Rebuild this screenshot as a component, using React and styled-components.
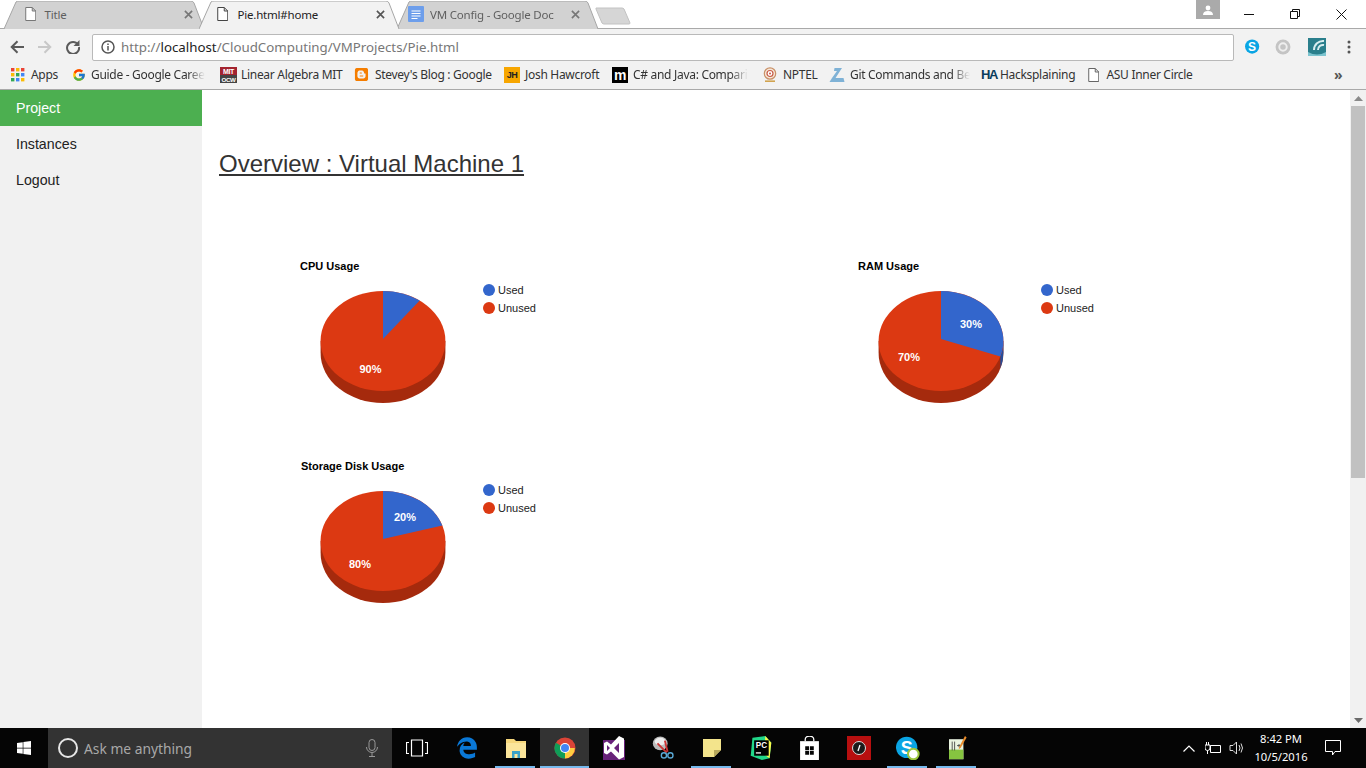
import React from "react";
import styled, { createGlobalStyle } from "styled-components";
import { FcGoogle } from "react-icons/fc";
import { FaBlogger, FaWindows, FaEdgeLegacy } from "react-icons/fa6";

const Global = createGlobalStyle`
  html, body { margin: 0; padding: 0; width: 1366px; height: 768px; overflow: hidden; background: #fff; }
  * { box-sizing: border-box; }
`;
const UI = `"Noto Sans", "Open Sans", sans-serif`;
const WEB = `"Liberation Sans", Arial, sans-serif`;

const Shell = styled.div`width:1366px;height:768px;display:flex;flex-direction:column;overflow:hidden;font-family:${WEB};`;

/* ---------- tab strip ---------- */
const TabStrip = styled.div`height:29px;display:flex;align-items:stretch;padding:1px 0 0 4px;background:#fff;border-bottom:1px solid #a9a9a9;flex:none;`;
const Tab = styled.div`
  position:relative;height:28px;width:${p=>p.$w}px;margin-left:${p=>p.$ml}px;padding:0 ${p=>p.$pr}px 2px ${p=>p.$pl}px;
  display:flex;align-items:center;z-index:${p=>p.$active?2:1};font-family:${UI};font-size:11.5px;letter-spacing:-.2px;
  color:${p=>p.$active?"#222":"#5f5f5f"};
`;
const TabShape = styled.svg`position:absolute;left:0;top:0;width:100%;height:100%;z-index:-1;`;
const TabTitle = styled.span`flex:1;margin-left:${p=>p.$gap}px;white-space:nowrap;overflow:hidden;
  ${p=>p.$fade?"-webkit-mask-image:linear-gradient(90deg,#000 88%,transparent);mask-image:linear-gradient(90deg,#000 88%,transparent);":""}`;
const NewTab = styled.svg`width:36px;height:18px;margin:6px 0 0 -9px;flex:none;`;
const Spacer = styled.div`flex:1;`;
const Avatar = styled.div`width:24px;height:19px;margin-top:-1px;background:#aaa;display:flex;align-items:center;justify-content:center;flex:none;`;
const WinButtons = styled.div`display:flex;margin:0 2px 0 6px;margin-top:-1px;flex:none;`;
const WinButton = styled.div`width:46px;height:28px;display:flex;align-items:center;justify-content:center;`;

const TabShapeFor = ({active,w}) => (
  <TabShape viewBox={`0 0 ${w} 28`} preserveAspectRatio="none">
    <path d={`M0 28 L12 1 Q13 0 15 0 L${w-19} 0 Q${w-17} 0 ${w-16} 2 L${w-6} 28`} fill={active?"#f2f2f2":"#d2d2d2"} stroke="#a6a6a6" strokeWidth="1"/>
  </TabShape>
);
const FileIcon = ({color="#666",size=14}) => (
  <svg width={size*0.82} height={size} viewBox="0 0 11 14" style={{flex:"none"}}>
    <path d="M.5.5h6.5l3.5 3.500v9.500h-10z M7 .5v3.500h3.500" fill="#fff" stroke={color} strokeWidth="1"/>
  </svg>
);
const DocIcon = () => (
  <svg width="16" height="16" viewBox="0 0 16 16" style={{flex:"none"}}>
    <rect width="16" height="16" rx="1" fill="#6d9eeb"/>
    <path d="M3.500 5h9M3.500 7.500h9M3.500 10h9M3.500 12.500h6" stroke="#fff" strokeWidth="1.100"/>
  </svg>
);
const X = ({color="#777"}) => (
  <svg width="9" height="9" viewBox="0 0 10 10" style={{flex:"none"}}>
    <path d="M1 1l8 8M9 1l-8 8" stroke={color} strokeWidth="1.800"/>
  </svg>
);

/* ---------- toolbar ---------- */
const Toolbar = styled.div`height:34px;background:#f2f2f2;display:flex;align-items:center;padding:2px 8px 0 0;flex:none;`;
const NavIcon = styled.div`width:28px;height:28px;display:flex;align-items:center;justify-content:center;flex:none;`;
const NavGroup = styled.div`display:flex;padding-left:3px;margin-right:5px;`;
const Omnibox = styled.div`width:1142px;height:27px;background:#fff;border:1px solid #b9b9b9;border-radius:2px;display:flex;align-items:center;padding-left:8px;gap:6px;font-family:${UI};font-size:13.3px;color:#777;white-space:nowrap;flex:none;`;
const Host = styled.span`color:#222;`;
const Ext = styled.div`display:flex;align-items:center;margin-left:9px;`;
const ExtCell = styled.div`width:${p=>p.$w}px;display:flex;justify-content:center;align-items:center;`;

/* ---------- bookmarks ---------- */
const Bookmarks = styled.div`height:27px;background:#f2f2f2;border-bottom:1px solid #a9a9a9;display:flex;align-items:center;padding:0 0 3px 11px;font-family:${UI};font-size:12px;letter-spacing:-.3px;color:#333;flex:none;`;
const Bookmark = styled.div`width:${p=>p.$w}px;display:flex;align-items:center;gap:${p=>p.$gap ?? 6}px;flex:none;white-space:nowrap;`;
const BookmarkText = styled.span`display:block;
  ${p=>p.$fade?"-webkit-mask-image:linear-gradient(90deg,#000 85%,transparent);mask-image:linear-gradient(90deg,#000 85%,transparent);":""}`;
const Square = styled.div`width:16px;height:16px;flex:none;background:${p=>p.$bg};color:${p=>p.$fg};font:bold ${p=>p.$fs}px ${WEB};display:flex;align-items:center;justify-content:center;letter-spacing:${p=>p.$ls ?? -.5}px;`;
const More = styled.span`margin-left:133px;color:#555;font-size:14px;font-weight:700;`;

/* ---------- page ---------- */
const Page = styled.div`flex:1;min-height:0;display:flex;background:#fff;`;
const Sidebar = styled.nav`width:202px;background:#f1f1f1;flex:none;`;
const NavItem = styled.div`height:36px;padding:0 16px;display:flex;align-items:center;font-size:14.2px;color:${p=>p.$active?"#fff":"#222"};background:${p=>p.$active?"#4caf50":"transparent"};`;
const Main = styled.main`flex:1;padding:58px 0 0 17px;min-width:0;`;
const Heading = styled.h2`margin:0;font-size:24px;line-height:32px;font-weight:400;color:#333;text-decoration:underline;`;
const Charts = styled.div`display:grid;grid-template-columns:558px 558px;grid-auto-rows:200px;margin:78px 0 0 81px;`;
const Chart = styled.section`display:flex;flex-direction:column;`;
const ChartTitle = styled.div`height:23px;line-height:16px;padding-left:${p=>p.$indent||0}px;font-size:11px;font-weight:700;color:#000;`;
const ChartBody = styled.div`display:flex;align-items:flex-start;padding-left:20px;`;
const PieSvg = styled.svg`width:126px;height:114px;margin-top:9px;flex:none;`;
const PieLabel = styled.text`font-family:${WEB};font-size:11px;font-weight:700;fill:#fff;text-anchor:middle;dominant-baseline:central;`;
const Legend = styled.div`margin-left:37px;display:flex;flex-direction:column;`;
const LegendRow = styled.div`height:18px;display:flex;align-items:center;gap:3px;font-size:11px;color:#222;`;
const Dot = styled.span`width:12px;height:12px;border-radius:50%;background:${p=>p.$c};flex:none;`;

const Scrollbar = styled.div`width:16px;background:#f1f1f1;display:flex;flex-direction:column;align-items:center;flex:none;`;
const ScrollArrow = styled.div`width:16px;height:16px;flex:none;display:flex;align-items:center;justify-content:center;`;
const Thumb = styled.div`width:14px;height:372px;background:#c1c1c1;flex:none;`;

/* ---------- taskbar ---------- */
const Taskbar = styled.div`height:40px;background:#050505;display:flex;align-items:stretch;flex:none;color:#fff;font-family:${UI};`;
const Start = styled.div`width:48px;display:flex;align-items:center;justify-content:center;flex:none;`;
const Search = styled.div`width:344px;background:#333;display:flex;align-items:center;padding-left:10px;flex:none;color:#a8a8a8;font-size:13.8px;`;
const Cortana = styled.span`width:20px;height:20px;border:2.5px solid #e6e6e6;border-radius:50%;margin-right:6px;flex:none;`;
const Mic = styled.span`margin-left:auto;margin-right:14px;display:flex;`;
const TaskView = styled.div`width:50px;display:flex;align-items:center;justify-content:center;flex:none;`;
const TaskIcon = styled.div`
  width:49px;flex:none;display:flex;align-items:center;justify-content:center;position:relative;
  background:${p=>p.$on?"#333":"transparent"};
  ${p=>p.$run?`&:after{content:"";position:absolute;bottom:0;left:${p.$on?0:4}px;right:${p.$on?0:5}px;height:2px;background:#76b9ed;}`:""}
`;
const Tray = styled.div`margin-left:auto;display:flex;align-items:center;flex:none;`;
const TrayIcon = styled.div`width:${p=>p.$w||24}px;display:flex;align-items:center;justify-content:center;`;
const Clock = styled.div`width:62px;text-align:center;font-size:11.2px;line-height:18px;margin-left:1px;`;
const Notify = styled.div`width:42px;margin-right:12px;display:flex;justify-content:center;align-items:center;`;

/* ---------- data ---------- */
const BLUE="#3366cc", RED="#dc3912", DARKRED="#a52a0d", DARKBLUE="#264d99";
const CX=63, CY=51, RX=62.4, RY=50, D=12;
const pt=(deg,dy=0)=>{const r=deg*Math.PI/180;return [CX+RX*Math.sin(r),CY-RY*Math.cos(r)+dy];};
const Pie=({used,labels})=>{
  const a=used*3.6;
  const [x,y]=pt(a);
  const large=a>180?1:0;
  const [sx,sy]=pt(90);
  const [bx,by]=pt(a,D);
  return (
    <PieSvg viewBox="0 0 126 114">
      <path d={`M${CX-RX} ${CY} v${D} A${RX} ${RY} 0 0 0 ${CX+RX} ${CY+D} v${-D} z`} fill={DARKRED}/>
      {a>90 && <path d={`M${sx} ${sy} v${D} A${RX} ${RY} 0 0 1 ${bx} ${by} L${x} ${y} A${RX} ${RY} 0 0 0 ${sx} ${sy} z`} fill={DARKBLUE}/>}
      <ellipse cx={CX} cy={CY} rx={RX} ry={RY} fill={RED}/>
      <path d={`M${CX} ${CY-2} L${CX} ${CY-RY} A${RX} ${RY} 0 ${large} 1 ${x} ${y} z`} fill={BLUE}/>
      {labels.map(l=><PieLabel key={l.t} x={l.x} y={l.y}>{l.t}</PieLabel>)}
    </PieSvg>
  );
};
const charts=[
  {title:"CPU Usage",used:10,labels:[{t:"90%",x:50.5,y:79}]},
  {title:"RAM Usage",used:30,labels:[{t:"30%",x:93,y:34},{t:"70%",x:31,y:67}]},
  {title:"Storage Disk Usage",used:20,indent:1,labels:[{t:"20%",x:85,y:27},{t:"80%",x:40,y:74}]},
];

const AppsIcon=()=>{
  const c=["#ea4335","#fbbc05","#ea4335","#fbbc05","#34a853","#4285f4","#34a853","#4285f4","#fbbc05"];
  return <svg width="14" height="14" viewBox="0 0 14 14" style={{flex:"none"}}>{c.map((f,i)=><rect key={i} x={(i%3)*5} y={Math.floor(i/3)*5} width="3.4" height="3.4" fill={f}/>)}</svg>;
};
const MitIcon=()=>(
  <svg width="17" height="16" viewBox="0 0 17 16" style={{flex:"none"}}>
    <rect width="17" height="8" fill="#a3232f"/><rect y="8" width="17" height="8" fill="#444"/>
    <text x="8.5" y="6.8" fontFamily={WEB} fontSize="7" fontWeight="700" fill="#fff" textAnchor="middle">MIT</text>
    <text x="8.5" y="14.5" fontFamily={WEB} fontSize="6.2" fontWeight="700" fill="#fff" textAnchor="middle">OCW</text>
  </svg>
);
const NptelIcon=()=>(
  <svg width="16" height="16" viewBox="0 0 16 16" style={{flex:"none"}}>
    <circle cx="8" cy="6.5" r="5.7" fill="#f6e7d8" stroke="#c99067" strokeWidth="1.2"/>
    <circle cx="8" cy="6.5" r="3" fill="#fff" stroke="#c75b46" strokeWidth="1.2"/>
    <circle cx="8" cy="6.5" r="1" fill="#c75b46"/>
    <rect x="3" y="13.4" width="10" height="1.6" fill="#d1a34f"/>
  </svg>
);
const GitLogo=()=>(
  <svg width="16" height="16" viewBox="0 0 16 16" style={{flex:"none"}}>
    <path d="M5.5 1H13L6.5 11H14.5L15.5 15H.5L3 11 8 4H5z" fill="#7fb2d6"/>
  </svg>
);

const Skype=({size=15,dot})=>(
  <svg width={size+ (dot?3:0)} height={size+(dot?3:0)} viewBox="0 0 18 18" style={{flex:"none"}}>
    <circle cx="8" cy="8.5" r="8" fill="#0aa5e4"/>
    <text x="8" y="13.4" fontFamily={WEB} fontSize="13.5" fontWeight="700" fill="#fff" textAnchor="middle">S</text>
    {dot && <circle cx="13" cy="13.5" r="4" fill="#fff" stroke="#9bc53d" strokeWidth="1.5"/>}
  </svg>
);
const ChromeIcon=()=>(
  <svg width="22" height="22" viewBox="0 0 22 22">
    <circle cx="11" cy="11" r="10.5" fill="#db4437"/>
    <path d="M11 11L1.9 5.7A10.5 10.5 0 0 0 11 21.5L16 11z" fill="#0f9d58"/>
    <path d="M11 11h9.9A10.5 10.5 0 0 1 11 21.5z" fill="#ffcd40"/>
    <circle cx="11" cy="11" r="5" fill="#fff"/><circle cx="11" cy="11" r="4" fill="#4285f4"/>
  </svg>
);
const FolderIcon=()=>(
  <svg width="22" height="19" viewBox="0 0 22 19">
    <path d="M1 0h8l2 2h10v17H1z" fill="#f6d77c"/><path d="M1 4h20v15H1z" fill="#fbe59b"/>
    <path d="M7 19v-7h8v7h-2.500v-4h-3v4z" fill="#3aa2c9"/>
  </svg>
);
const VsIcon=()=>(
  <svg width="22" height="24" viewBox="0 0 22 24">
    <path d="M0 4h22v20H0z" fill="#68217a"/>
    <path d="M16 0l5 2.500V21l-5 2.500-8-8-4 3-3-1.500V7l3-1.500 4 3zM4 9v6l3-3zM16 7l-5 5 5 5z" fill="#fff"/>
  </svg>
);
const SnipIcon=()=>(
  <svg width="24" height="24" viewBox="0 0 24 26">
    <ellipse cx="9" cy="8" rx="8" ry="7.500" fill="#bbb"/><ellipse cx="9" cy="6" rx="6" ry="4" fill="#eee"/>
    <path d="M6 8l10 10M14 5l3 12" stroke="#c33" strokeWidth="2"/>
    <circle cx="13" cy="21" r="2.800" fill="none" stroke="#5aa9d6" strokeWidth="1.500"/>
    <circle cx="20" cy="21" r="2.800" fill="none" stroke="#5aa9d6" strokeWidth="1.500"/>
  </svg>
);
const Sticky=()=>(
  <svg width="18" height="18" viewBox="0 0 18 18"><path d="M0 0h18v11l-7 7H0z" fill="#f3e48c"/><path d="M18 11l-7 7v-7z" fill="#b8a95c"/></svg>
);
const PcIcon=()=>(
  <svg width="24" height="24" viewBox="0 0 24 28">
    <path d="M2 2L17 0l7 8-2 18-9 2L0 23z" fill="#21d789"/><path d="M17 0l7 8-2 18-6-4z" fill="#fcf84a"/>
    <rect x="4" y="5" width="17" height="18" fill="#000"/>
    <text x="12.500" y="14" fontFamily={WEB} fontSize="9.500" fontWeight="700" fill="#fff" textAnchor="middle">PC</text>
    <rect x="6" y="19" width="6" height="1.500" fill="#fff"/>
  </svg>
);
const StoreIcon=()=>(
  <svg width="21" height="24" viewBox="0 0 22 28">
    <path d="M6 6V4a5 4 0 0 1 10 0v2" fill="none" stroke="#fff" strokeWidth="1.500"/>
    <path d="M0 6h22v22H0z" fill="#fff"/>
    <path d="M6 12h4.500v4.500H6zM11.500 12H16v4.500h-4.500zM6 17.500h4.500V22H6zM11.500 17.500H16V22h-4.500z" fill="#050505"/>
  </svg>
);
const RedIcon=()=>(
  <svg width="24" height="24" viewBox="0 0 24 24">
    <rect width="24" height="24" fill="#b70f0f"/><circle cx="12" cy="12" r="6.500" fill="#1a1a1a" stroke="#ddd" strokeWidth="1"/>
    <path d="M11 15l2-6" stroke="#fff" strokeWidth="1.300"/>
  </svg>
);
const NotepadIcon=()=>(
  <svg width="22" height="24" viewBox="0 0 22 30">
    <path d="M1 4h18v25H1z" fill="#e9f3e0"/><path d="M1 17h18v12H1z" fill="#86c440"/>
    <path d="M5 7v11M8 7v11M11 12h5M13.500 10v4" stroke="#333" strokeWidth="1"/>
    <path d="M21 0l-7 13-1 4 3-3 7-12z" fill="#e98b2a"/>
  </svg>
);

export default function App(){
  return (
    <Shell>
      <Global/>
      <TabStrip>
        <Tab $w={206} $ml={0} $pl={21} $pr={17}>
          <TabShapeFor w={206}/><FileIcon color="#777"/><TabTitle $gap={8}>Title</TabTitle><X/>
        </Tab>
        <Tab $active $w={206} $ml={-11} $pl={18} $pr={20}>
          <TabShapeFor active w={206}/><FileIcon color="#444"/><TabTitle $gap={9}>Pie.html#home</TabTitle><X color="#555"/>
        </Tab>
        <Tab $w={207} $ml={-8} $pl={11} $pr={24}>
          <TabShapeFor w={207}/><DocIcon/><TabTitle $gap={6} $fade>VM Config - Google Doc</TabTitle><X/>
        </Tab>
        <NewTab viewBox="0 0 36 18"><path d="M1 1h26q1 0 2 1l6 14q0 1-1 1H9q-1 0-2-1L1 2z" fill="#d6d6d6" stroke="#c2c2c2"/></NewTab>
        <Spacer/>
        <Avatar><svg width="10" height="10" viewBox="0 0 10 10"><circle cx="5" cy="3" r="2.400" fill="#fff"/><path d="M0 10q0-4 5-4t5 4z" fill="#fff"/></svg></Avatar>
        <WinButtons>
          <WinButton><svg width="10" height="10"><path d="M0 5.500h10" stroke="#111"/></svg></WinButton>
          <WinButton><svg width="10" height="10"><path d="M.5 2.500h7v7h-7zM2.500 2.500v-2h7v7h-2" fill="none" stroke="#111"/></svg></WinButton>
          <WinButton><svg width="11" height="11"><path d="M.5.500l10 10M10.500.500l-10 10" stroke="#111"/></svg></WinButton>
        </WinButtons>
      </TabStrip>

      <Toolbar>
        <NavGroup>
          <NavIcon><svg width="14" height="14" viewBox="0 0 14 14"><path d="M14 7H2M7.500 1.200L1.700 7l5.800 5.800" fill="none" stroke="#5a5a5a" strokeWidth="2"/></svg></NavIcon>
          <NavIcon><svg width="14" height="14" viewBox="0 0 14 14"><path d="M0 7h12M6.500 1.200L12.300 7l-5.800 5.800" fill="none" stroke="#c8c8c8" strokeWidth="2"/></svg></NavIcon>
          <NavIcon><svg width="14" height="14" viewBox="0 0 14 14"><path d="M12 4.500A6 6 0 1 0 13 7" fill="none" stroke="#5a5a5a" strokeWidth="2"/><path d="M13.500 0v6h-6z" fill="#5a5a5a"/></svg></NavIcon>
        </NavGroup>
        <Omnibox>
          <svg width="14" height="14" viewBox="0 0 14 14" style={{flex:"none"}}><circle cx="7" cy="7" r="6" fill="none" stroke="#555" strokeWidth="1.500"/><path d="M7 6v4.500M7 3.500v1.500" stroke="#555" strokeWidth="1.500"/></svg>
          <span>http://<Host>localhost</Host>/CloudComputing/VMProjects/Pie.html</span>
        </Omnibox>
        <Ext>
          <ExtCell $w={19}><Skype size={16}/></ExtCell>
          <ExtCell $w={42}><svg width="16" height="16" viewBox="0 0 15 15"><circle cx="7.500" cy="7.500" r="7" fill="#c4c4c4"/><circle cx="7.500" cy="7.500" r="3.500" fill="none" stroke="#eee" strokeWidth="1.800"/></svg></ExtCell>
          <ExtCell $w={26}><svg width="18" height="18" viewBox="0 0 18 18"><rect width="18" height="18" fill="#2a7f8c"/><path d="M16 3A9 9 0 0 0 6 12M16 7A5 5 0 0 0 10 12" fill="none" stroke="#d8eef0" strokeWidth="2"/><path d="M0 14q9 5 18 0v4H0z" fill="#7cc4cf"/></svg></ExtCell>
          <ExtCell $w={38}><svg width="4" height="14" viewBox="0 0 4 14"><circle cx="2" cy="2" r="1.500" fill="#555"/><circle cx="2" cy="7" r="1.500" fill="#555"/><circle cx="2" cy="12" r="1.500" fill="#555"/></svg></ExtCell>
        </Ext>
      </Toolbar>

      <Bookmarks>
        <Bookmark $w={61}><AppsIcon/><BookmarkText>Apps</BookmarkText></Bookmark>
        <Bookmark $w={148} $gap={5}><FcGoogle size={14} style={{flex:"none"}}/><BookmarkText $fade>Guide - Google Caree</BookmarkText></Bookmark>
        <Bookmark $w={134} $gap={4}><MitIcon/><BookmarkText>Linear Algebra MIT</BookmarkText></Bookmark>
        <Bookmark $w={150}><FaBlogger size={15} color="#f57d00" style={{flex:"none"}}/><BookmarkText>Stevey's Blog : Google</BookmarkText></Bookmark>
        <Bookmark $w={108} $gap={5}><Square $bg="#f7a600" $fg="#222" $fs={9}>JH</Square><BookmarkText>Josh Hawcroft</BookmarkText></Bookmark>
        <Bookmark $w={150} $gap={5}><Square $bg="#000" $fg="#fff" $fs={14}>m</Square><BookmarkText $fade>C# and Java: Compari</BookmarkText></Bookmark>
        <Bookmark $w={67} $gap={5}><NptelIcon/><BookmarkText>NPTEL</BookmarkText></Bookmark>
        <Bookmark $w={152} $gap={5}><GitLogo/><BookmarkText $fade>Git Commands and Be</BookmarkText></Bookmark>
        <Bookmark $w={107} $gap={3}><Square $bg="transparent" $fg="#0b3d5c" $fs={13} $ls={-1.500}>HA</Square><BookmarkText>Hacksplaining</BookmarkText></Bookmark>
        <Bookmark $w={113} $gap={7}><FileIcon color="#666" size={14}/><BookmarkText>ASU Inner Circle</BookmarkText></Bookmark>
        <More>»</More>
      </Bookmarks>

      <Page>
        <Sidebar>
          <NavItem $active>Project</NavItem>
          <NavItem>Instances</NavItem>
          <NavItem>Logout</NavItem>
        </Sidebar>
        <Main>
          <Heading>Overview : Virtual Machine 1</Heading>
          <Charts>
            {charts.map(c=>(
              <Chart key={c.title}>
                <ChartTitle $indent={c.indent}>{c.title}</ChartTitle>
                <ChartBody>
                  <Pie used={c.used} labels={c.labels}/>
                  <Legend>
                    <LegendRow><Dot $c={BLUE}/>Used</LegendRow>
                    <LegendRow><Dot $c={RED}/>Unused</LegendRow>
                  </Legend>
                </ChartBody>
              </Chart>
            ))}
          </Charts>
        </Main>
        <Scrollbar>
          <ScrollArrow><svg width="9" height="5"><path d="M0 5L4.500 0 9 5z" fill="#8a8a8a"/></svg></ScrollArrow>
          <Thumb/>
          <Spacer/>
          <ScrollArrow><svg width="9" height="5"><path d="M0 0L4.500 5 9 0z" fill="#6a6a6a"/></svg></ScrollArrow>
        </Scrollbar>
      </Page>

      <Taskbar>
        <Start><FaWindows size={16} color="#fff"/></Start>
        <Search>
          <Cortana/>Ask me anything
          <Mic><svg width="12" height="18" viewBox="0 0 12 18"><rect x="3" y=".5" width="6" height="11" rx="3" fill="none" stroke="#999"/><path d="M.5 8a5.500 5.500 0 0 0 11 0M6 14v3.500M3 17.500h6" fill="none" stroke="#999"/></svg></Mic>
        </Search>
        <TaskView><svg width="22" height="18" viewBox="0 0 22 18"><path d="M5.500 1h11v16h-11zM3 3.500H.5v11H3M19 3.500h2.500v11H19" fill="none" stroke="#fff" strokeWidth="1.200"/></svg></TaskView>
        <TaskIcon><FaEdgeLegacy size={22} color="#0a78d7"/></TaskIcon>
        <TaskIcon $run><FolderIcon/></TaskIcon>
        <TaskIcon $run $on><ChromeIcon/></TaskIcon>
        <TaskIcon><VsIcon/></TaskIcon>
        <TaskIcon><SnipIcon/></TaskIcon>
        <TaskIcon $run><Sticky/></TaskIcon>
        <TaskIcon><PcIcon/></TaskIcon>
        <TaskIcon><StoreIcon/></TaskIcon>
        <TaskIcon><RedIcon/></TaskIcon>
        <TaskIcon $run><Skype size={21} dot/></TaskIcon>
        <TaskIcon $run><NotepadIcon/></TaskIcon>
        <Tray>
          <TrayIcon><svg width="12" height="7"><path d="M.5 6.500L6 1l5.500 5.500" fill="none" stroke="#fff" strokeWidth="1.200"/></svg></TrayIcon>
          <TrayIcon><svg width="16" height="12" viewBox="0 0 16 12"><path d="M5.500 3.500h10v7h-10zM0 3h5v3a2.500 2.500 0 0 1-5 0zM1.500 3V0M3.500 3V0M2.500 8.500V12" fill="none" stroke="#fff"/></svg></TrayIcon>
          <TrayIcon><svg width="16" height="16" viewBox="0 0 16 16"><path d="M1 5.500h3L7.500 2v12L4 10.500H1zM10 5q2 3 0 6M12 3.500q3 4.500 0 9" fill="none" stroke="#ddd"/></svg></TrayIcon>
          <Clock>8:42 PM<br/>10/5/2016</Clock>
          <Notify><svg width="16" height="16" viewBox="0 0 16 16"><path d="M.5.500h15v11H10L7.500 15V11.500H.5z" fill="none" stroke="#fff"/></svg></Notify>
        </Tray>
      </Taskbar>
    </Shell>
  );
}
